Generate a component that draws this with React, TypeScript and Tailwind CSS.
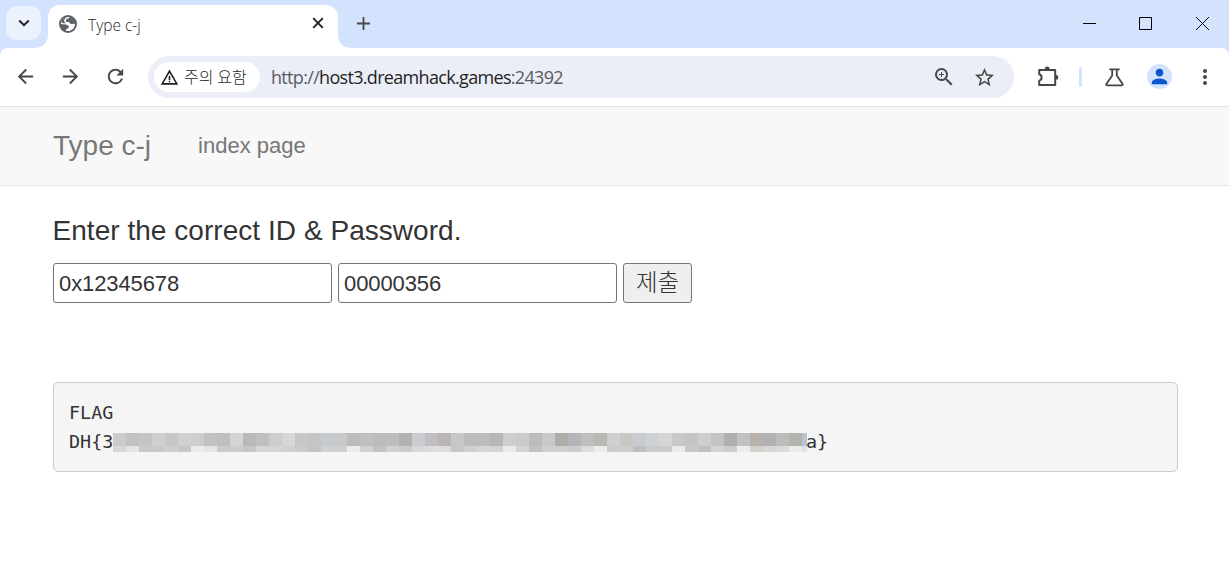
import React from "react";
import { MdArrowBack, MdArrowForward, MdRefresh, MdZoomIn, MdStarBorder, MdMoreVert, MdPerson, MdWarningAmber } from "react-icons/md";

const TOP = "cbcbcb c2c1bf c5c5c5 d0cfce c5c8c8 cfd1d3 cfcdcc c2c2c0 bfbfbf d4d4d4 b8b9bb bfbfbf cdcdcd d8d7d5 c5c8c7 c5c5c5 c7cacc c9c9c9 bbbbbb c0c0c0 bcbcbc bebdbb b2b1af cbccd1 bfbfbf bab5b2 c6c7c9 bcbcbc bcbcba b5b6b8 cccdcf cdcbca babdbc c9c9c9 aeadab b3b5bb bfbfbf b9b8b3 cfcfcf c8c7c2 cacbcd ced1d6 d6d6d6 cac8c6 c3c4c8 cfcecc c3c3c3 b0aeaf bec2c5 b7b2ae b0b2b6 bdbcba b3b2ae b8c2d0".split(" ");
const BOTTOM = "d7d7d7 e5e4e2 c9c9c9 c9c9c9 cdcecf c7c8ca ebebeb e6e5e4 cbcbcb cbcccc c7c6c5 d4d5d8 d5d5d5 d2d1d0 cacaca c3c3c3 d0d0d0 cfd0d3 ebebeb d2d1cf c3c3c3 d1d1d1 cacbcd d7d8dc dcdcdc dcdcdc c8c5c3 cfd0d2 d8d5d2 d3d4d6 ebebeb d5d4d2 c1c2c1 cfcfcf cfcfcf cbccd0 dcdcdc ededed cccccc cecdcc bebebe cbcbcb cacaca ebebe8 c8c8c8 c1c1c0 d2d3d5 cdcdcd ebecec d4d0cc d8d7d4 dadad9 ebebe9 dfe4ec".split(" ");

function Redaction() {
  return (
    <span className="mt-[6px] block w-[694px] shrink-0 overflow-hidden">
      {[TOP, BOTTOM].map((row, r) => (
        <span key={r} className={r === 0 ? "flex h-[13px]" : "flex h-[6px]"}>
          {row.map((c, i) => (
            <span key={i} className="w-[13px] shrink-0" style={{ backgroundColor: `#${c}` }} />
          ))}
        </span>
      ))}
    </span>
  );
}

function Globe() {
  return (
    <svg className="-mt-[6px] ml-[2px] shrink-0" width="18" height="18" viewBox="0 0 18 18">
      <circle cx="9" cy="9" r="9" fill="#5f6368" />
      <path d="M10.6 2.1C9.7 4.2 7.2 3.6 6.9 5.6c-.2 1.4 1 1.6 2.4 1.5 1.2 0 1.3 1.6 2.6 1.8 1.4.2 2.8-.8 4.1.3-.1 3.600-3.200 6.800-7 6.800-.9 0-1.300-.1-2-.3-.2-1.500.4-2 1.700-2.300 1.300-.4 1.500-1.800.7-2.700C8.200 9.300 5.500 9.800 2 9c0-3.900 3.100-7 7-7z" fill="#fff" />
      <path d="M2.300 7.200C4 8.400 5.700 8.500 7.400 8.200 6.100 7.900 5 7 5.100 5.500 5.200 4 6.800 3.300 8.200 2.100 5.200 2.400 2.900 4.500 2.300 7.200z" fill="#5f6368" />
    </svg>
  );
}

function TabStrip() {
  return (
    <div className="flex h-12 items-start bg-[#d3e2fd]">
      <div className="ml-[6px] mt-[6px] flex h-[34px] w-[35px] items-center justify-center rounded-[11px] bg-[#ebf2fe]">
        <svg width="12" height="8" viewBox="0 0 12 8" fill="none" stroke="#1f1f1f" strokeWidth="2"><path d="M1.2 1.5 6 6.2l4.8-4.7" /></svg>
      </div>
      <svg className="-ml-[7px] mt-[34px] shrink-0" width="14" height="14" viewBox="0 0 14 14"><path d="M14 0v14H0C9 14 14 9 14 0" fill="#fff" /></svg>
      <div className="mt-[5px] flex h-[43px] w-[290px] items-center rounded-t-[12px] bg-white pl-[9px] pr-[14px]">
        <Globe />
        <span className="-mt-[2px] ml-[11px] flex-1 whitespace-nowrap text-[15.5px] font-light tracking-[0px] text-[#1f1f1f]">Type c-j</span>
        <svg className="-mt-[7px]" width="12" height="12" viewBox="0 0 12 12" stroke="#1f1f1f" strokeWidth="1.9"><path d="m1.2 1.2 9.6 9.6m0-9.6-9.6 9.6" /></svg>
      </div>
      <svg className="mt-[34px] shrink-0" width="14" height="14" viewBox="0 0 14 14"><path d="M0 0v14h14C5 14 0 9 0 0" fill="#fff" /></svg>
      <svg className="ml-[5px] mt-[17px]" width="13" height="13" viewBox="0 0 13 13" stroke="#474747" strokeWidth="1.8"><path d="M6.5 0v13M0 6.5h13" /></svg>
      <div className="ml-auto mr-[20px] mt-[17px] flex gap-[43px]">
        <svg className="-ml-[1px] mr-[1px]" width="13" height="13" viewBox="0 0 13 13" stroke="#000"><path d="M0 6.5h13" /></svg>
        <svg className="-ml-[1px] mr-[1px]" width="13" height="13" viewBox="0 0 13 13" stroke="#000" fill="none"><path d="M.5.5h12v12H.5z" /></svg>
        <svg width="13" height="13" viewBox="0 0 13 13" stroke="#000"><path d="m0 0 13 13M13 0 0 13" /></svg>
      </div>
    </div>
  );
}

function Toolbar() {
  return (
    <div className="bg-[#d3e2fd]">
      <div className="flex h-[59px] items-center rounded-t-[8px] border-b border-[#dfe1e5] bg-white pl-[14px] text-[#474747]">
        <MdArrowBack className="-mt-[1px] h-[23px] w-[23px] shrink-0" />
        <MdArrowForward className="-mt-[1px] ml-[22px] h-[23px] w-[23px] shrink-0" />
        <MdRefresh className="-mt-[1px] ml-[22px] h-[23px] w-[23px] shrink-0" />
        <div className="ml-[21px] flex h-[42px] w-[866px] shrink-0 items-center rounded-full bg-[#ebeef7] pl-[6px]">
          <div className="flex h-[30px] w-[106px] items-center rounded-full bg-white pl-[6px]">
            <MdWarningAmber className="h-[19px] w-[19px] shrink-0 text-[#1f1f1f]" />
            <span className="-mt-[3px] ml-[5px] whitespace-nowrap font-['Noto_Sans_CJK_KR',sans-serif] text-[16px] font-light leading-[20px] tracking-[0.1px] text-[#1f1f1f]">주의 요함</span>
          </div>
          <span className="ml-[11px] mt-[1px] flex-1 whitespace-nowrap text-[18px] tracking-[-0.68px] text-[#5a5a5f]">
            http://<span className="text-[#1f1f1f]">host3.dreamhack.games</span>:24392
          </span>
          <MdZoomIn className="h-[24px] w-[24px]" />
          <MdStarBorder className="ml-[17px] mr-[18px] h-[23px] w-[23px]" />
        </div>
        <svg className="-mt-[2px] ml-[24px] shrink-0" width="21" height="21" viewBox="0 0 21 21"><path d="M1.2 4h16v15H1.2v-4.3c3.200-.8 3.200-5.600 0-6.400z" fill="none" stroke="#474747" strokeWidth="2" strokeLinejoin="round" /><path d="M6.8 3a2.4 2.4 0 0 1 4.8 0zM18 9a2.4 2.4 0 0 1 0 4.8z" fill="#474747" /></svg>
        <span className="ml-[20px] h-[20px] w-[3px] shrink-0 rounded-full bg-[#d3e2fd]" />
        <svg className="ml-[23px] shrink-0" width="19" height="19" viewBox="0 0 19 19" fill="none" stroke="#474747" strokeWidth="1.8"><path d="M4.3 1.4h10.4M7.2 1.4v6L1.4 16c-.3.8 0 1.3.8 1.3h14.6c.8 0 1.1-.5.8-1.3l-5.800-8.600v-6" /></svg>
        <span className="-mt-[1px] ml-[23px] flex h-[25px] w-[25px] shrink-0 items-center justify-center rounded-full bg-[#d3e2fd] text-[#0b57d0]"><MdPerson className="h-[23px] w-[23px]" /></span>
        <MdMoreVert className="ml-[21px] h-[24px] w-[24px] shrink-0" />
      </div>
    </div>
  );
}

const field = "h-[40px] w-[279px] rounded-[3px] border border-[#767676] bg-white px-[5px] pt-[1px] text-[22px] tracking-[-0.1px] text-[#333] outline-none";

export default function App() {
  return (
    <div className="h-[573px] w-[1229px] overflow-hidden bg-white font-['Open_Sans','Noto_Sans_CJK_KR',sans-serif]">
      <TabStrip />
      <Toolbar />
      <div className="font-['Liberation_Sans','Noto_Sans_CJK_KR',sans-serif] text-[#333]">
        <nav className="flex h-[79px] items-center border-b border-[#e7e7e7] bg-[#f8f8f8] pl-[53px] text-[#777]">
          <span className="text-[28px]">Type c-j</span>
          <span className="-mt-[2px] ml-[47px] text-[22px]">index page</span>
        </nav>
        <main className="px-[53px]">
          <h4 className="-ml-[0.5px] pt-[28px] text-[28px] leading-[34px] tracking-[0.04px]">Enter the correct ID &amp; Password.</h4>
          <form className="mt-[15px] flex gap-[6px]" onSubmit={(e) => e.preventDefault()}>
            <input className={field} defaultValue="0x12345678" />
            <input className={field} defaultValue="00000356" />
            <button className="h-[40px] w-[69px] rounded-[3px] border border-[#767676] bg-[#efefef] text-[23.5px] font-light leading-[34px]">제출</button>
          </form>
          <pre className="mt-[79px] h-[90px] w-[1125px] rounded-[5px] border border-[#ccc] bg-[#f5f5f5] pl-[15px] pt-[15px] font-['DejaVu_Sans_Mono',monospace] text-[18.4px] leading-[29px]">
            <div>FLAG</div>
            <div className="flex"><span className="w-[44px]">{"DH{3"}</span><Redaction /><span className="-ml-[1px]">{"a}"}</span></div>
          </pre>
        </main>
      </div>
    </div>
  );
}
